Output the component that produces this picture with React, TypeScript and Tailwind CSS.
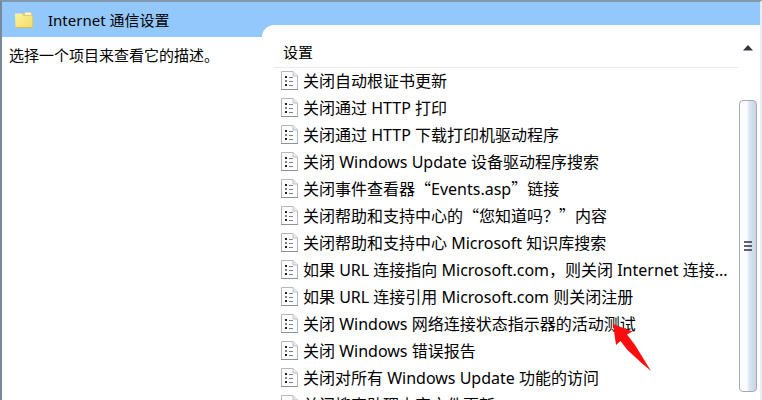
const SETTINGS = [
  "关闭自动根证书更新",
  "关闭通过 HTTP 打印",
  "关闭通过 HTTP 下载打印机驱动程序",
  "关闭 Windows Update 设备驱动程序搜索",
  "关闭事件查看器“Events.asp”链接",
  "关闭帮助和支持中心的“您知道吗？”内容",
  "关闭帮助和支持中心 Microsoft 知识库搜索",
  "如果 URL 连接指向 Microsoft.com，则关闭 Internet 连接...",
  "如果 URL 连接引用 Microsoft.com 则关闭注册",
  "关闭 Windows 网络连接状态指示器的活动测试",
  "关闭 Windows 错误报告",
  "关闭对所有 Windows Update 功能的访问",
  "关闭搜索助理内容文件更新",
];

// row that the red pointer marks
const MARKED = 9;

function FolderIcon() {
  return (
    <svg width="20" height="20" viewBox="0 0 20 20" className="shrink-0" aria-hidden="true">
      <defs>
        <linearGradient id="folder" x1="0" y1="0" x2="1" y2="1">
          <stop offset="0" stopColor="#fbf3a0" />
          <stop offset="1" stopColor="#f1dc66" />
        </linearGradient>
      </defs>
      <path d="M9 4l1-2h7l1.500 2v4H9z" fill="#dccb7a" />
      <path d="M11 2.500h5.500l1 2.500h-6.500z" fill="#f6f3e0" />
      <path d="M1 3.500h7l1.500 2.500h9V18H1.500z" fill="url(#folder)" />
      <path d="M1.500 17.500h17" stroke="#d2bd5c" />
      <path d="M18.500 6v11.500" stroke="#dcc968" />
    </svg>
  );
}

function PolicyIcon() {
  return (
    <svg width="17" height="19" viewBox="0 0 17 19" className="shrink-0" aria-hidden="true">
      <path d="M.5.500h11.500l4.500 4.500v13.500H.5z" fill="#fdfdfd" stroke="#b4b8be" />
      <path d="M0 18.500h17" stroke="#8d9198" />
      <path d="M12 .5v4.500h4.500" fill="#e6e9ee" stroke="#bfc3ca" />
      <path d="M4 5h2v2H4zM4 13h2v2H4z" fill="#1c1c24" />
      <path d="M4 9h2v2H4z" fill="#7c808a" />
      <path d="M8 6.500h4M8 10.500h4M8 14.500h4" stroke="#7d818c" />
    </svg>
  );
}

function Pointer() {
  return (
    <svg
      width="40"
      height="48"
      viewBox="0 0 40 48"
      className="pointer-events-none absolute top-1/2 -right-4 z-10"
      aria-hidden="true"
    >
      <path d="M1 0L20.500 7.500L15 10.500L23 21L39 47L29 38.500L15 25.500L8.500 17L4 21z" fill="#fb0d0d" />
    </svg>
  );
}

// curly quotes take the full-width form of the Chinese font
function SettingName({ name }: { name: string }) {
  return (
    <span>
      {name.split(/([“”])/).map((part, i) =>
        part === "“" || part === "”" ? (
          <span key={i} className="font-['Noto_Sans_CJK_SC',sans-serif]">
            {part}
          </span>
        ) : (
          part
        )
      )}
    </span>
  );
}

function Scrollbar() {
  return (
    <div className="flex w-5 shrink-0 flex-col items-center pb-2">
      <button type="button" aria-label="向上滚动" className="flex h-[71px] w-full shrink-0 justify-center pt-4">
        <svg width="10" height="6" viewBox="0 0 10 6" aria-hidden="true">
          <path d="M5 0l5 5.500H0z" fill="#34373f" />
        </svg>
      </button>
      <div className="flex w-[18px] flex-1 flex-col items-center justify-center gap-[2px] rounded-sm border border-[#a3aab4] bg-linear-to-r from-[#fbfcfd] from-45% via-[#dde6f1] via-55% to-[#c9d6e6]">
        <span className="h-[2px] w-2 bg-[#5b636d]" />
        <span className="h-[2px] w-2 bg-[#5b636d]" />
        <span className="h-[2px] w-2 bg-[#5b636d]" />
      </div>
    </div>
  );
}

export default function App() {
  return (
    <div className="flex h-screen flex-col overflow-hidden border-t-2 border-r-2 border-l-2 border-t-[#8399ab] border-r-[#e6eff7] border-l-[#75899b] bg-white font-['Noto_Sans','Noto_Sans_CJK_SC',sans-serif] text-[15px] leading-5 text-black">
      <header className="flex h-[35px] shrink-0 items-center gap-[14px] bg-[#92c8fb] pl-3">
        <FolderIcon />
        <h1>Internet 通信设置</h1>
      </header>

      <div className="flex min-h-0 flex-1">
        <aside className="w-[260px] shrink-0 px-[7px] py-2">
          <p className="whitespace-nowrap">选择一个项目来查看它的描述。</p>
        </aside>

        {/* the settings panel rises into the title bar with a rounded corner */}
        <main className="-mt-3 flex min-w-0 flex-1 rounded-tl-xl bg-white pt-1 pr-[2px] pl-3">
          <div className="min-w-0 flex-1 overflow-hidden pt-1">
            <table className="w-full border-collapse text-left">
              <thead>
                <tr className="h-[34px] border-b border-[#e4ebf1]">
                  <th className="pt-1 pl-[9px] font-normal">设置</th>
                </tr>
              </thead>
              <tbody className="text-base leading-5">
                {SETTINGS.map((name, i) => (
                  <tr key={name} className="h-[27px]">
                    <td className="pl-[7px]">
                      <div className="relative flex w-fit items-center gap-[5px] whitespace-nowrap">
                        <PolicyIcon />
                        <SettingName name={name} />
                        {i === MARKED && <Pointer />}
                      </div>
                    </td>
                  </tr>
                ))}
              </tbody>
            </table>
          </div>
          <Scrollbar />
        </main>
      </div>
    </div>
  );
}
